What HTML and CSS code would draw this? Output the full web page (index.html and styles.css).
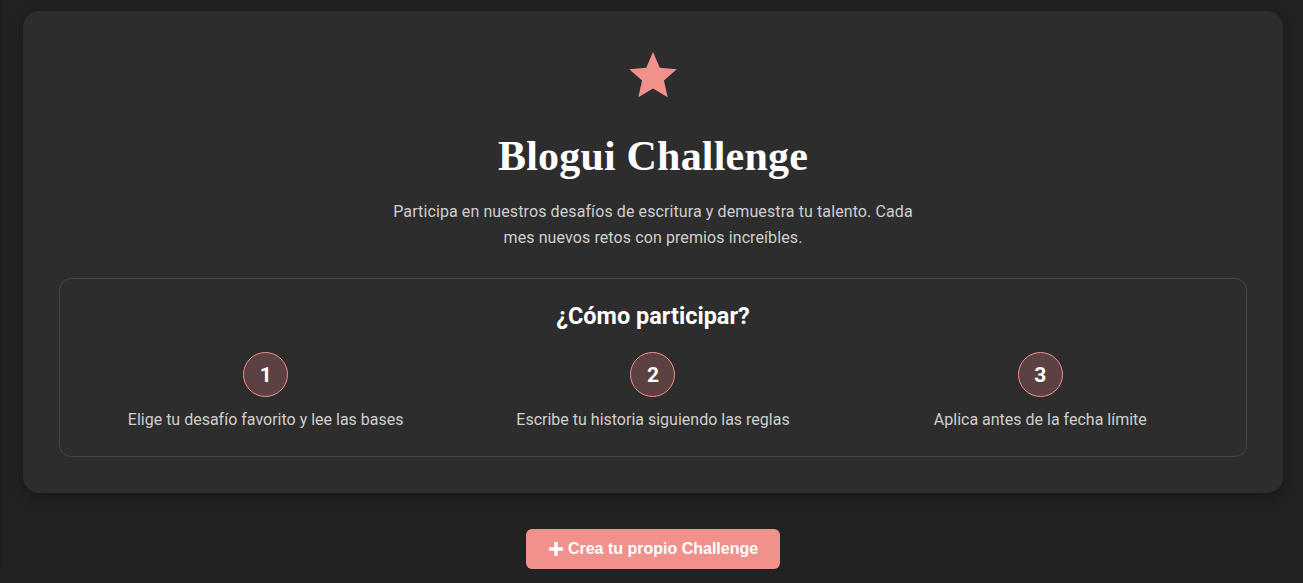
FILE: index.html
```html
<!DOCTYPE html>
<html lang="es">

<head>
    <meta charset="UTF-8">
    <meta name="viewport" content="width=device-width, initial-scale=1.0">
    <title>Blogui Challenge</title>
    <link rel="stylesheet" href="styles.css">
</head>

<body>
    <div class="page">
        <section class="challenge-card">
            <svg class="star-icon" viewBox="-25 -25 50 46" width="50" height="46" aria-hidden="true">
                <polygon points="0,-25 6.76,-9.3 23.78,-7.73 10.94,3.55 14.69,20.23 0,11.5 -14.69,20.23 -10.94,3.55 -23.78,-7.73 -6.76,-9.3" />
            </svg>
            <h1 class="challenge-title">Blogui Challenge</h1>
            <p class="challenge-intro">Participa en nuestros desafíos de escritura y demuestra tu talento. Cada mes nuevos retos con premios increíbles.</p>

            <div class="how-to">
                <h2>¿Cómo participar?</h2>
                <div class="steps">
                    <div class="step">
                        <div class="step-num">1</div>
                        <p>Elige tu desafío favorito y lee las bases</p>
                    </div>
                    <div class="step">
                        <div class="step-num">2</div>
                        <p>Escribe tu historia siguiendo las reglas</p>
                    </div>
                    <div class="step">
                        <div class="step-num">3</div>
                        <p>Aplica antes de la fecha límite</p>
                    </div>
                </div>
            </div>
        </section>

        <div class="actions">
            <button class="create-btn">
                <svg viewBox="0 0 16 16" width="16" height="16" aria-hidden="true">
                    <path d="M6.3 1h3.4v5.3H15v3.4H9.7V15H6.3V9.7H1V6.3h5.3z" />
                </svg>
                Crea tu propio Challenge
            </button>
        </div>
    </div>
</body>

</html>
```

FILE: styles.css
```css
:root {
    --bg: #222222;
    --card: #2d2d2d;
    --text: #ffffff;
    --muted: #cfcfcf;
    --accent: #f0918b;
    --line: #454545;
}

body {
    margin: 0;
    background: var(--bg);
    border-left: 3px solid #1b1f23;
    font-family: Roboto, "Liberation Sans", sans-serif;
    color: var(--text);
}

.page {
    padding: 11px 20px 0 20px;
}

.challenge-card {
    background: var(--card);
    border-radius: 16px;
    padding: 41px 36px 36px;
    display: flex;
    flex-direction: column;
    align-items: center;
    box-shadow: 0 4px 14px rgba(0, 0, 0, 0.35);
}

.star-icon {
    display: block;
    fill: var(--accent);
}

.challenge-title {
    margin: 34px 0 0;
    font-family: "Liberation Serif", "DejaVu Serif", serif;
    font-weight: 700;
    font-size: 42px;
    line-height: 48px;
    letter-spacing: 0.2px;
}

.challenge-intro {
    margin: 19px 0 0;
    max-width: 530px;
    text-align: center;
    font-size: 16px;
    line-height: 26px;
    letter-spacing: 0.1px;
    color: var(--muted);
}

.how-to {
    align-self: stretch;
    margin-top: 27px;
    border: 1px solid var(--line);
    border-radius: 12px;
    padding: 24px;
}

.how-to h2 {
    margin: 0;
    text-align: center;
    font-size: 23.5px;
    line-height: 26px;
    font-weight: 700;
}

.steps {
    display: grid;
    grid-template-columns: repeat(3, 1fr);
    gap: 24px;
    margin-top: 23px;
}

.step {
    display: flex;
    flex-direction: column;
    align-items: center;
}

.step-num {
    width: 43px;
    height: 43px;
    border-radius: 50%;
    border: 1px solid var(--accent);
    background: #5b4141;
    display: flex;
    align-items: center;
    justify-content: center;
    font-size: 21px;
    font-weight: 700;
}

.step p {
    margin: 11px 0 0;
    font-size: 16px;
    line-height: 24px;
    color: var(--muted);
    text-align: center;
}

.actions {
    display: flex;
    justify-content: center;
    padding-top: 36px;
}

.create-btn {
    display: flex;
    align-items: center;
    gap: 4px;
    height: 40px;
    padding: 0 22px;
    background: var(--accent);
    border: none;
    border-radius: 6px;
    color: #fff;
    font-family: "Liberation Sans", Arial, sans-serif;
    font-weight: 700;
    font-size: 16px;
    cursor: pointer;
}

.create-btn svg {
    fill: #fff;
}
```
